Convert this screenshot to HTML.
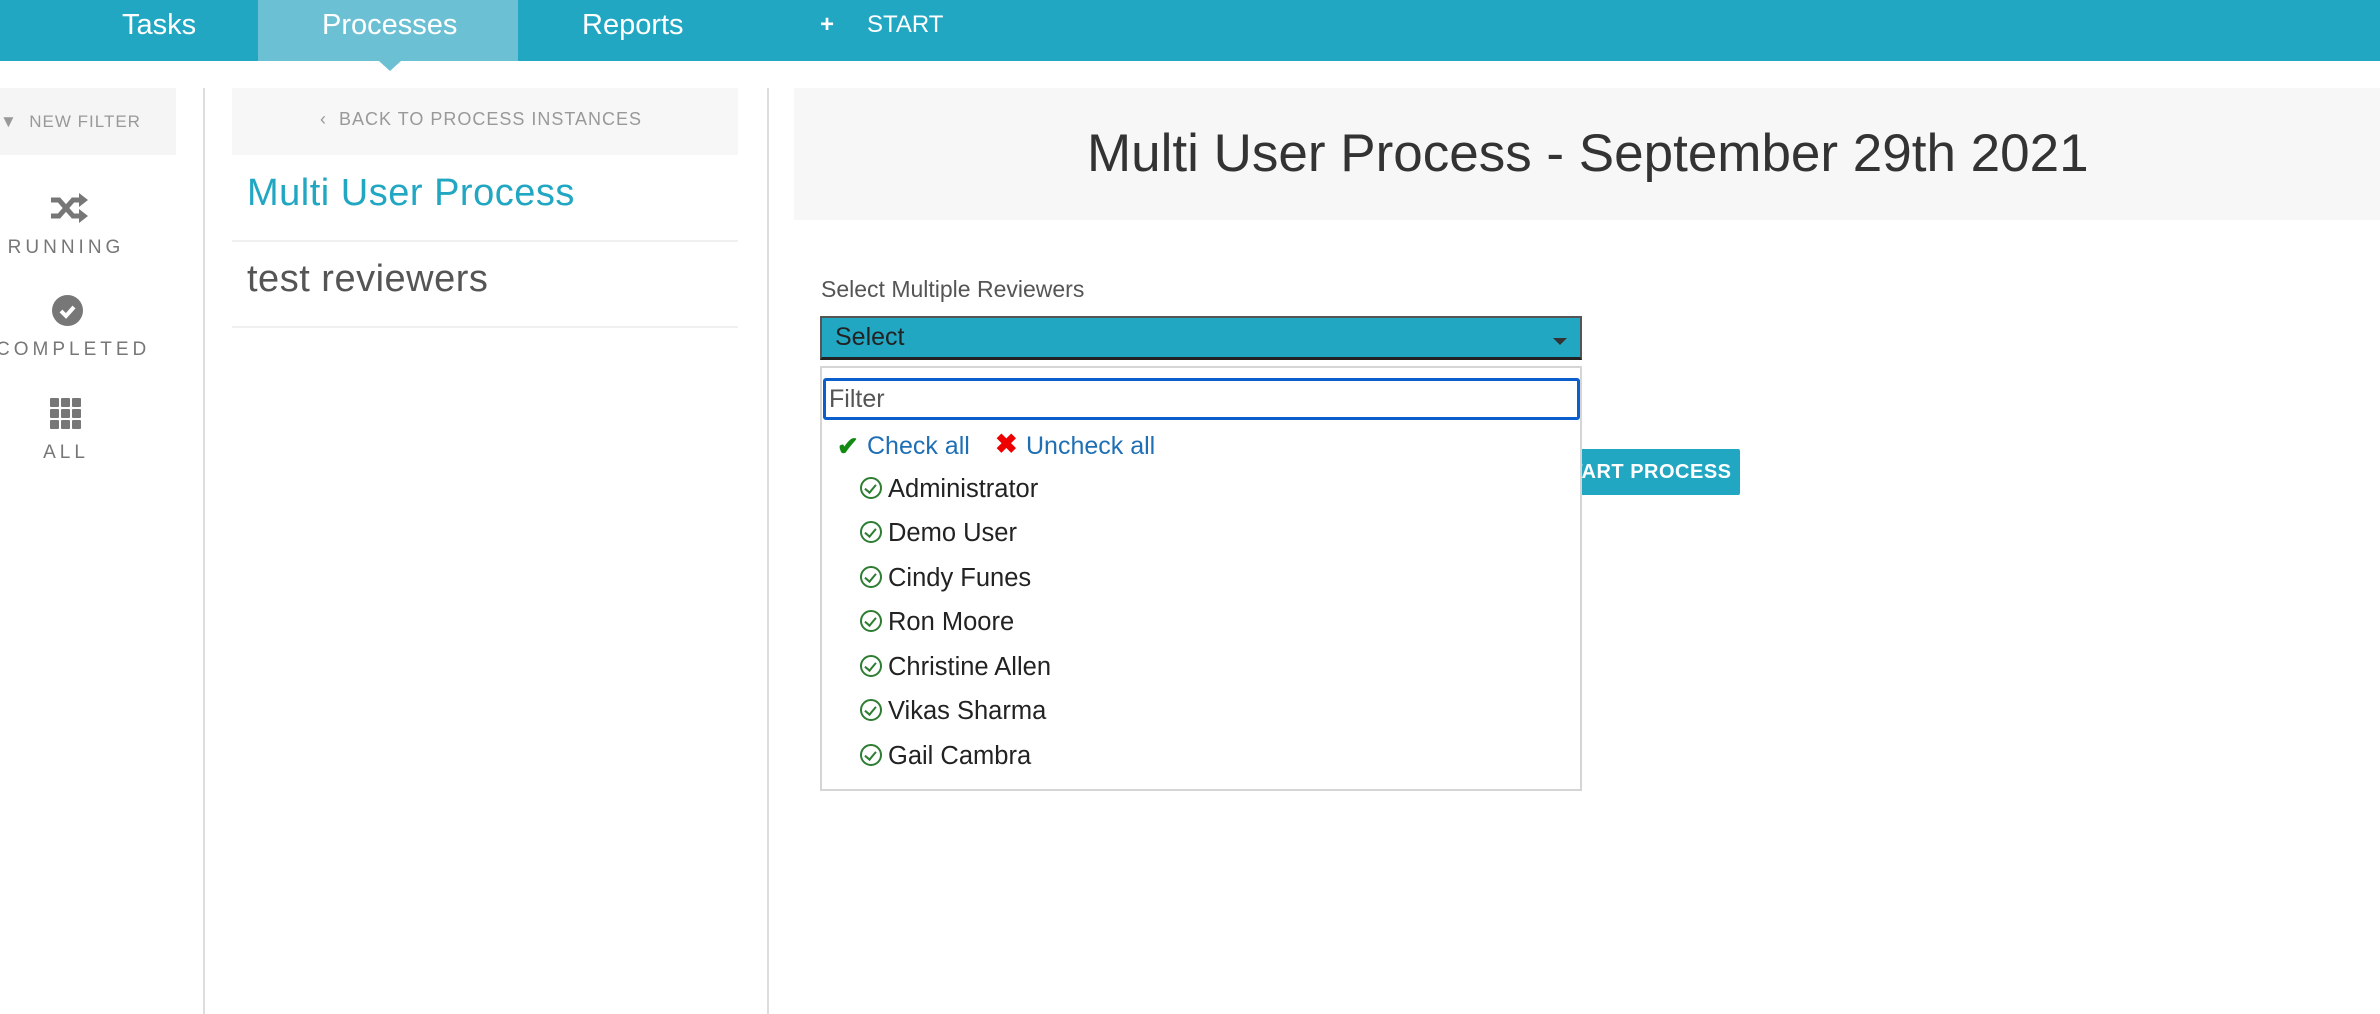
<!DOCTYPE html>
<html><head><style>
*{margin:0;padding:0;box-sizing:border-box}
body{width:2380px;height:1014px;overflow:hidden;background:#fff;font-family:"Liberation Sans",sans-serif;position:relative}
.a{position:absolute;white-space:nowrap}
.nav{position:absolute;left:0;top:0;width:2380px;height:61px;background:#22a7c3}
.nt{position:absolute;top:0;height:61px;line-height:50px;color:#fff;font-size:29px}
.sb{color:#777;font-size:19px;letter-spacing:4px;text-align:center;width:140px;left:-4px}
.it{left:888px;font-size:25.5px;color:#222}
.ck{position:absolute;left:860px;width:22px;height:22px;border:2.5px solid #2e7d32;border-radius:50%}
.ck:after{content:"";position:absolute;left:5px;top:3px;width:5px;height:9px;border:solid #2e7d32;border-width:0 2.5px 2.5px 0;transform:rotate(40deg)}
</style></head><body>
<div class="nav"></div>
<div class="a" style="left:258px;top:0;width:260px;height:61px;background:#6cc0d4"></div>
<div class="a" style="left:379px;top:61px;width:0;height:0;border-left:11px solid transparent;border-right:11px solid transparent;border-top:10px solid #6cc0d4"></div>
<div class="nt" style="left:122px">Tasks</div>
<div class="nt" style="left:322px">Processes</div>
<div class="nt" style="left:582px">Reports</div>
<div class="nt" style="left:820px;font-size:24px;font-weight:bold">+</div>
<div class="nt" style="left:867px;font-size:24px">START</div>

<div class="a" style="left:0;top:88px;width:176px;height:67px;background:#f5f5f5"></div>
<div class="a" style="left:0;top:112px;color:#999;font-size:17px;letter-spacing:1px">&#9660;&nbsp; NEW FILTER</div>
<div class="a" style="left:203px;top:88px;width:2px;height:926px;background:#ddd"></div>
<svg class="a" style="left:50px;top:192px" width="40" height="32" viewBox="0 0 40 32"><path d="M1 8h8l14 16h8M1 24h8l14-16h8" fill="none" stroke="#777" stroke-width="5"/><path d="M29 1l9 7-9 7zM29 17l9 7-9 7z" fill="#777"/></svg>
<div class="a sb" style="top:237px">RUNNING</div>
<svg class="a" style="left:52px;top:295px" width="31" height="31"><circle cx="15.5" cy="15.5" r="15.5" fill="#777"/><path d="M9 16l5 5 8-9" fill="none" stroke="#fff" stroke-width="4"/></svg>
<div class="a sb" style="top:339px">COMPLETED</div>
<svg class="a" style="left:50px;top:398px" width="31" height="31"><g fill="#777"><rect x="0" y="0" width="9" height="9" rx="1"/><rect x="11" y="0" width="9" height="9" rx="1"/><rect x="22" y="0" width="9" height="9" rx="1"/><rect x="0" y="11" width="9" height="9" rx="1"/><rect x="11" y="11" width="9" height="9" rx="1"/><rect x="22" y="11" width="9" height="9" rx="1"/><rect x="0" y="22" width="9" height="9" rx="1"/><rect x="11" y="22" width="9" height="9" rx="1"/><rect x="22" y="22" width="9" height="9" rx="1"/></g></svg>
<div class="a sb" style="top:442px">ALL</div>

<div class="a" style="left:232px;top:88px;width:506px;height:67px;background:#f7f7f7"></div>
<div class="a" style="left:320px;top:109px;color:#999;font-size:18px;letter-spacing:1px">&#8249;&nbsp; BACK TO PROCESS INSTANCES</div>
<div class="a" style="left:247px;top:172px;color:#22a7c3;font-size:38px;letter-spacing:0.5px">Multi User Process</div>
<div class="a" style="left:232px;top:240px;width:506px;height:2px;background:#f0f0f0"></div>
<div class="a" style="left:247px;top:258px;color:#555;font-size:38px;letter-spacing:0.5px">test reviewers</div>
<div class="a" style="left:232px;top:326px;width:506px;height:2px;background:#f0f0f0"></div>
<div class="a" style="left:767px;top:88px;width:2px;height:926px;background:#ddd"></div>

<div class="a" style="left:794px;top:88px;width:1586px;height:132px;background:#f7f7f7"></div>
<div class="a" style="left:1087px;top:123px;color:#333;font-size:53px">Multi User Process - September 29th 2021</div>

<div class="a" style="left:821px;top:276px;color:#555;font-size:23px">Select Multiple Reviewers</div>
<div class="a" style="left:820px;top:316px;width:762px;height:44px;background:#22a7c3;border:2px solid #555;border-bottom:3px solid #222"></div>
<div class="a" style="left:835px;top:323px;color:#222;font-size:25px">Select</div>
<div class="a" style="left:1553px;top:338px;border-left:7px solid transparent;border-right:7px solid transparent;border-top:7px solid #333"></div>

<div class="a" style="left:1548px;top:449px;width:192px;height:46px;background:#22a7c3;border-radius:2px;color:#fff;font-size:20px;line-height:46px;text-align:center;letter-spacing:0.5px;font-weight:bold">START PROCESS</div>

<div class="a" style="left:820px;top:366px;width:762px;height:425px;background:#fff;border:2px solid #d5d5d5"></div>
<div class="a" style="left:823px;top:378px;width:757px;height:42px;border:3px solid #0a5fcc;border-radius:3px"></div>
<div class="a" style="left:829px;top:385px;color:#555;font-size:25px">Filter</div>
<div class="a" style="left:837px;top:431px;color:#138a13;font-size:26px;font-weight:bold">&#10004;</div>
<div class="a" style="left:867px;top:432px;color:#1f6fb5;font-size:25px">Check all</div>
<div class="a" style="left:995px;top:429px;color:#e00;font-size:27px;font-weight:bold">&#10006;</div>
<div class="a" style="left:1026px;top:432px;color:#1f6fb5;font-size:25px">Uncheck all</div>

<div class="ck" style="top:477px"></div><div class="a it" style="top:475px">Administrator</div>
<div class="ck" style="top:521px"></div><div class="a it" style="top:519px">Demo User</div>
<div class="ck" style="top:566px"></div><div class="a it" style="top:564px">Cindy Funes</div>
<div class="ck" style="top:610px"></div><div class="a it" style="top:608px">Ron Moore</div>
<div class="ck" style="top:655px"></div><div class="a it" style="top:653px">Christine Allen</div>
<div class="ck" style="top:699px"></div><div class="a it" style="top:697px">Vikas Sharma</div>
<div class="ck" style="top:744px"></div><div class="a it" style="top:742px">Gail Cambra</div>
</body></html>
